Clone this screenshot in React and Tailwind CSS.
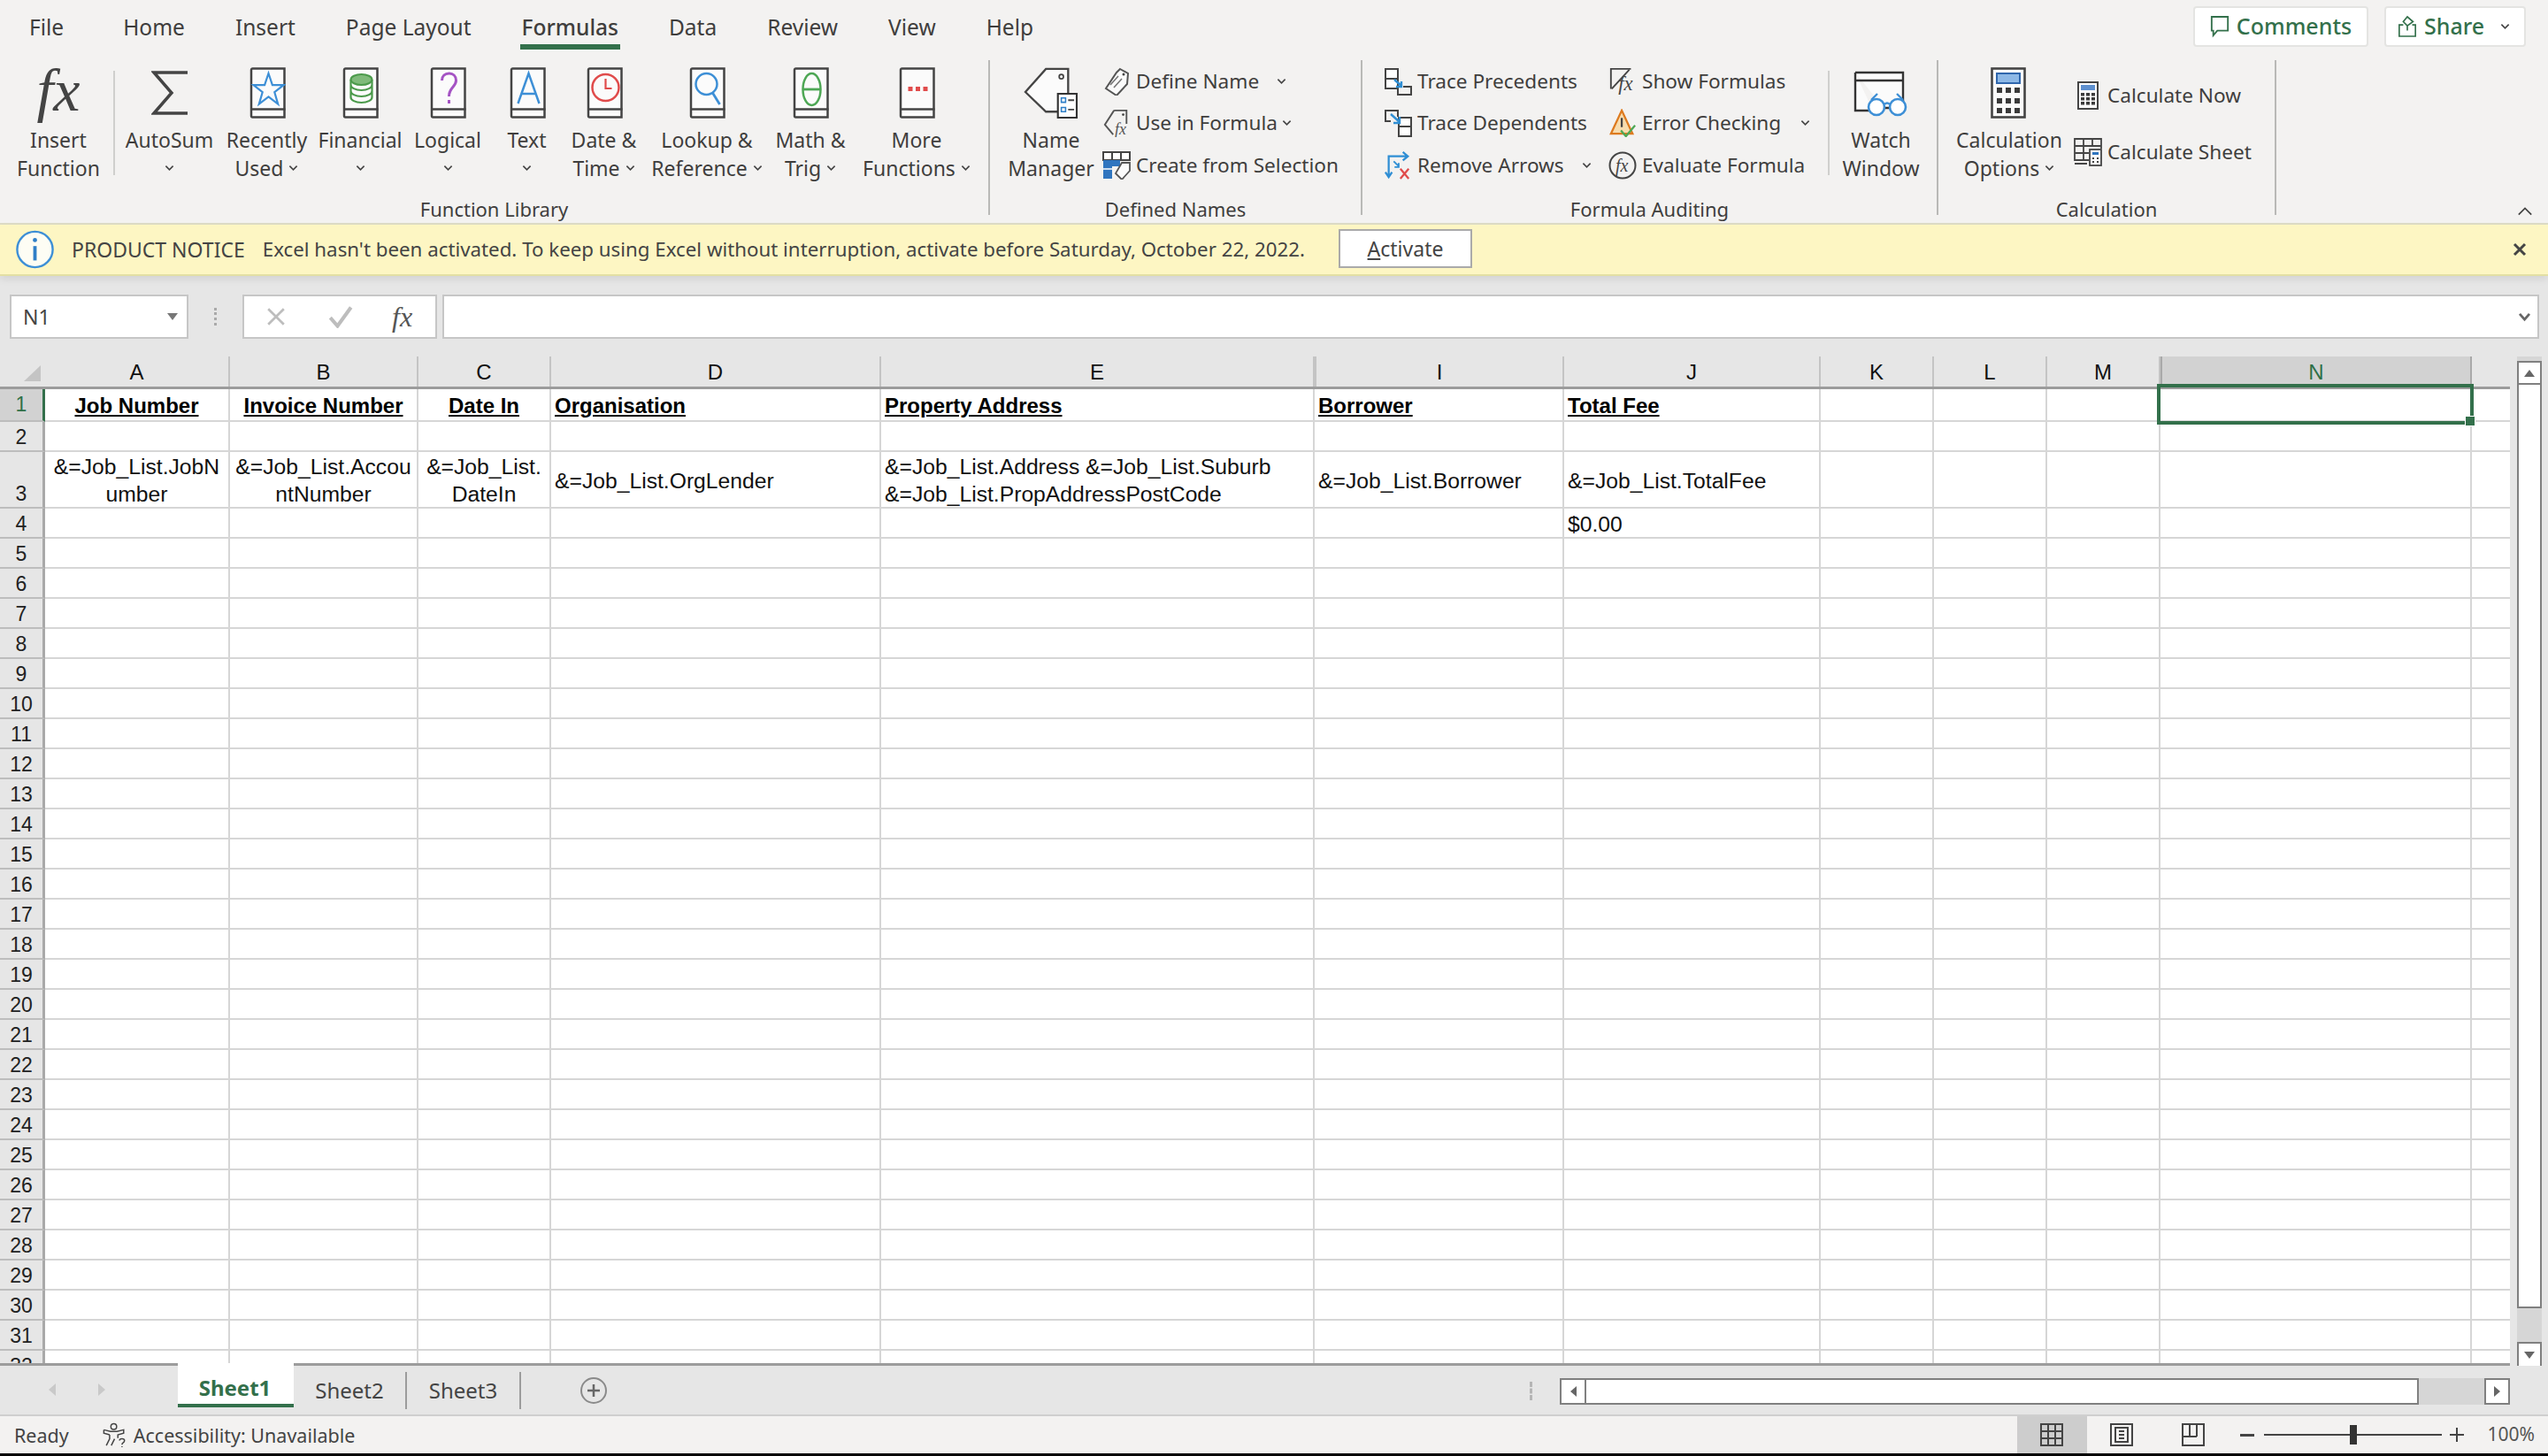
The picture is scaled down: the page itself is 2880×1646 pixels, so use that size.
const TABS = ['File', 'Home', 'Insert', 'Page Layout', 'Formulas', 'Data', 'Review', 'View', 'Help']
const COLUMNS = ['A', 'B', 'C', 'D', 'E', 'I', 'J', 'K', 'L', 'M', 'N']
const GRID = 'grid grid-cols-[51px_209px_213px_150px_373px_490px_282px_290px_128px_128px_128px_352px_1fr]'

const ROW_CONTENT = {
  1: {
    A: ['Job Number', 'head center'],
    B: ['Invoice Number', 'head center'],
    C: ['Date In', 'head center'],
    D: ['Organisation', 'head'],
    E: ['Property Address', 'head'],
    I: ['Borrower', 'head'],
    J: ['Total Fee', 'head'],
  },
  3: {
    A: ['&=Job_List.JobN\number', 'center'],
    B: ['&=Job_List.Accou\nntNumber', 'center'],
    C: ['&=Job_List.\nDateIn', 'center'],
    D: ['&=Job_List.OrgLender', ''],
    E: ['&=Job_List.Address &=Job_List.Suburb\n&=Job_List.PropAddressPostCode', ''],
    I: ['&=Job_List.Borrower', ''],
    J: ['&=Job_List.TotalFee', ''],
  },
  4: { J: ['$0.00', ''] },
}

const rowHeight = (n) => (n === 1 ? 'h-[40px]' : n === 3 ? 'h-[64px]' : 'h-[34px]')
const ROWS = Array.from({ length: 32 }, (_, i) => i + 1)

function Chevron({ className = '' }) {
  return (
    <svg viewBox="0 0 12 8" className={`w-[11px] h-[8px] shrink-0 ${className}`} fill="none" stroke="#444" strokeWidth="1.8">
      <path d="M1.5 1.5 6 6l4.5-4.5" />
    </svg>
  )
}

function Book({ children }) {
  return (
    <svg viewBox="-1.5 0 42 58" className="w-[42px] h-[58px]" fill="none">
      <path d="M3 1.5h36v55H3a1.5 1.5 0 0 1-1.5-1.5V3A1.5 1.5 0 0 1 3 1.5z" fill="#fbfbfb" stroke="#444" strokeWidth="2.5" />
      <path d="M2 47.5h38" stroke="#444" strokeWidth="2.5" />
      {children}
    </svg>
  )
}

const IconSigma = () => (
  <svg viewBox="0 0 42 58" className="w-[42px] h-[58px]" fill="none">
    <path d="M41 6H3l20 23L3 52h38" stroke="#444" strokeWidth="3.5" />
  </svg>
)
const IconStar = () => (
  <Book>
    <path d="M21 7l4.4 13.2H38l-10.2 8 3.9 13.4L21 33.4l-10.7 8.2 3.9-13.4-10.2-8h12.6z" stroke="#3d8fd6" strokeWidth="2.2" />
  </Book>
)
const IconCoins = () => (
  <Book>
    <ellipse cx="21" cy="14" rx="12" ry="6" fill="#7fba7a" stroke="#4b9a4b" strokeWidth="2" />
    <path d="M9 14v6c0 3 5 6 12 6s12-3 12-6v-6M9 20v7c0 3 5 6 12 6s12-3 12-6v-7M9 27v7c0 3 5 6 12 6s12-3 12-6v-7" stroke="#4b9a4b" strokeWidth="2.2" />
  </Book>
)
const IconQuestion = () => (
  <Book>
    <path d="M13 15c0-5 3.5-8 8-8s8 3 8 8c0 7-8 8-8 18" stroke="#a554c4" strokeWidth="3" />
    <path d="M21 37v4" stroke="#a554c4" strokeWidth="3" />
  </Book>
)
const IconA = () => (
  <Book>
    <path d="M9 41 21 7l12 34M13 30h16" stroke="#3d8fd6" strokeWidth="2.5" />
  </Book>
)
const IconClock = () => (
  <Book>
    <circle cx="21" cy="23" r="15" stroke="#e04b4b" strokeWidth="2.5" />
    <path d="M21 13v11h7" stroke="#e04b4b" strokeWidth="2.2" />
  </Book>
)
const IconSearch = () => (
  <Book>
    <circle cx="19" cy="19" r="12" stroke="#3d8fd6" strokeWidth="2.5" />
    <path d="M26 29l8 13" stroke="#3d8fd6" strokeWidth="2.8" />
  </Book>
)
const IconTheta = () => (
  <Book>
    <ellipse cx="21" cy="25" rx="10" ry="18" stroke="#4ea755" strokeWidth="2.5" />
    <path d="M11 25h20" stroke="#4ea755" strokeWidth="2.8" />
  </Book>
)
const IconDots = () => (
  <Book>
    <path d="M10 22h5v5h-5zM18.500 22h5v5h-5zM27 22h5v5h-5z" fill="#e04b4b" />
  </Book>
)
const IconNameManager = () => (
  <svg viewBox="0 0 64 60" className="w-[64px] h-[58px]" fill="none">
    <path d="M26 2h26v50H26L2 29z" fill="#fbfbfb" stroke="#444" strokeWidth="2.4" />
    <circle cx="44" cy="11" r="2.5" stroke="#444" strokeWidth="1.8" />
    <path d="M40 31h22v28H40z" fill="#fff" stroke="#333" strokeWidth="2.2" />
    <path d="M44 36h5v5h-5zM44 47h5v5h-5z" stroke="#2f7fc7" strokeWidth="1.6" />
    <path d="M52 38.500h7M52 49.500h7" stroke="#444" strokeWidth="2" />
  </svg>
)
const IconWatch = () => (
  <svg viewBox="0 0 66 58" className="w-[66px] h-[58px]" fill="none">
    <path d="M4 6h54v40H36M4 6v43h20M4 15h54" stroke="#333" strokeWidth="2.4" fill="#fbfbfb" />
    <circle cx="28" cy="45" r="9" fill="#fff" stroke="#3d8fd6" strokeWidth="2.6" />
    <circle cx="52" cy="45" r="9" fill="#fff" stroke="#3d8fd6" strokeWidth="2.6" />
    <path d="M37 42c2-2 4-2 6 0M22 37l7-7M58 37l-7-7" stroke="#3d8fd6" strokeWidth="2.4" />
  </svg>
)
const IconCalcBig = () => (
  <svg viewBox="0 0 42 58" className="w-[42px] h-[58px]">
    <rect x="1.500" y="1.500" width="37" height="55" fill="#fbfbfb" stroke="#444" strokeWidth="2.6" />
    <rect x="7" y="7" width="26" height="11" fill="#8db8e6" stroke="#2f66ad" strokeWidth="2" />
    {[23, 35, 46].map((y) =>
      [7, 17, 27].map((x) => <rect key={`${x}-${y}`} x={x} y={y} width="6" height="6" fill="#3b3b3b" />),
    )}
  </svg>
)

const IconTag = () => (
  <svg viewBox="0 0 32 32" className="w-[32px] h-[32px]" fill="none">
    <path d="M20 2l9 5-1 12-12 13-12-8L16 6z" stroke="#555" strokeWidth="2" fill="#fbfbfb" />
    <path d="M9 20l9-10M13 23l9-10" stroke="#777" strokeWidth="1.6" />
    <circle cx="24" cy="8" r="1.5" fill="#444" />
  </svg>
)
const IconTagFx = () => (
  <svg viewBox="0 0 32 34" className="w-[32px] h-[32px]" fill="none">
    <path d="M13 2h15v16M13 2 2 19l10 12" stroke="#555" strokeWidth="2" />
    <circle cx="24" cy="7" r="1.500" fill="#444" />
    <text x="14" y="31" fontSize="19" fontStyle="italic" fontFamily="Liberation Serif" fill="#555">fx</text>
  </svg>
)
const IconCreate = () => (
  <svg viewBox="0 0 32 32" className="w-[32px] h-[32px]" fill="none">
    <path d="M1 1h30v9H1z" fill="#fff" stroke="#444" strokeWidth="2" />
    <path d="M11 1v10M21 1v10" stroke="#444" strokeWidth="2" />
    <path d="M1 10h10v21H1z" fill="#2f75bf" />
    <path d="M11 10h9v7h-9z" fill="#2f75bf" />
    <path d="M1 20h10" stroke="#fff" strokeWidth="1.5" />
    <path d="M22 13h9v9l-9 10-7-7z" fill="#fbfbfb" stroke="#555" strokeWidth="1.8" />
  </svg>
)
const IconPrecedents = () => (
  <svg viewBox="0 0 32 32" className="w-[32px] h-[32px]" fill="none">
    <path d="M2 2h14v22H2z" fill="#fff" stroke="#444" strokeWidth="2" />
    <path d="M2 13h14" stroke="#444" strokeWidth="2" />
    <path d="M22 22h9v9H16v-6" stroke="#444" strokeWidth="2" />
    <path d="M12 14l8 7m0-5v6h-6" stroke="#2f8ed4" strokeWidth="2.400" />
  </svg>
)
const IconDependents = () => (
  <svg viewBox="0 0 32 32" className="w-[32px] h-[32px]" fill="none">
    <path d="M16 9V2H2v12h6" stroke="#444" strokeWidth="2" />
    <path d="M17 10h14v21H17z" fill="#fff" stroke="#444" strokeWidth="2" />
    <path d="M17 20h14" stroke="#444" strokeWidth="2" />
    <path d="M8 6l10 9m0-6v7h-7" stroke="#2f8ed4" strokeWidth="2.400" />
  </svg>
)
const IconRemove = () => (
  <svg viewBox="0 0 32 34" className="w-[32px] h-[32px]" fill="none">
    <path d="M5 30V6h21M22 1l6 5-6 5M1 25l4 6 4-6" stroke="#2f8ed4" strokeWidth="2.4" />
    <path d="M11 12l6 6m0-4v5h-5" stroke="#2f8ed4" strokeWidth="2" />
    <path d="M19 21l10 12M29 21 19 33" stroke="#e04b4b" strokeWidth="2.4" />
  </svg>
)
const IconShowFormulas = () => (
  <svg viewBox="0 0 32 34" className="w-[32px] h-[32px]" fill="none">
    <path d="M2 26V2h24" stroke="#444" strokeWidth="2" />
    <path d="M3 26 24 3" stroke="#444" strokeWidth="2" />
    <text x="11" y="28" fontSize="24" fontStyle="italic" fontFamily="Liberation Serif" fill="#444">fx</text>
  </svg>
)
const IconError = () => (
  <svg viewBox="0 0 32 34" className="w-[32px] h-[32px]" fill="none">
    <path d="M15 2 2 30h26z" fill="#f7dcae" stroke="#dd7a1f" strokeWidth="2.4" />
    <path d="M15 11v11" stroke="#444" strokeWidth="2.4" />
    <path d="M14 26l6 7 11-13" stroke="#4ea755" strokeWidth="2.4" />
  </svg>
)
const IconEvaluate = () => (
  <svg viewBox="0 0 32 32" className="w-[32px] h-[32px]" fill="none">
    <circle cx="16" cy="16" r="14.500" stroke="#444" strokeWidth="2" />
    <text x="8" y="23" fontSize="20" fontStyle="italic" fontFamily="Liberation Serif" fill="#444">fx</text>
  </svg>
)
const IconCalcNow = () => (
  <svg viewBox="0 0 24 32" className="w-[24px] h-[32px]">
    <rect x="1" y="1" width="22" height="30" fill="#fbfbfb" stroke="#444" strokeWidth="2" />
    <rect x="4" y="4" width="16" height="6" fill="#5d8fcf" />
    {[13, 18, 23].map((y) =>
      [4, 10, 16].map((x) => <rect key={`${x}-${y}`} x={x} y={y} width="4" height="3.500" fill="#3b3b3b" />),
    )}
  </svg>
)
const IconCalcSheet = () => (
  <svg viewBox="0 0 32 32" className="w-[32px] h-[32px]" fill="none">
    <path d="M1 26V1h30v11M1 9h30M1 17h16M1 25h16M11 1v24M21 1v8" stroke="#444" strokeWidth="1.800" />
    <rect x="18" y="13" width="13" height="18" fill="#fbfbfb" stroke="#444" strokeWidth="1.800" />
    <path d="M21 16h7v3h-7z" fill="#2f75bf" />
    <path d="M21 22h2v2h-2zM26 22h2v2h-2zM21 26h2v2h-2zM26 26h2v2h-2z" fill="#444" />
    <path d="M1 29h14" stroke="#444" strokeWidth="2" />
  </svg>
)
const IconComment = () => (
  <svg viewBox="0 0 24 28" className="w-[22px] h-[26px]" fill="none" stroke="#33704b" strokeWidth="2">
    <path d="M2 2h20v17H9l-5 6v-6H2z" />
  </svg>
)
const IconShare = () => (
  <svg viewBox="0 0 24 28" className="w-[22px] h-[28px]" fill="none" stroke="#33704b" strokeWidth="1.800">
    <path d="M7 12H2v14h20V12h-4M12 2l7 6-7 5-5-5zM12 13v6" />
  </svg>
)
const IconAccessibility = () => (
  <svg viewBox="0 0 30 30" className="w-[29px] h-[28px]" fill="none" stroke="#444" strokeWidth="1.600">
    <circle cx="14" cy="5" r="3.500" />
    <path d="M2 9l8 2h8l8-2v4l-7 2v4M9 15 2 13V9M9 15v5l-4 8M15 20l-4 8" />
    <path d="M21 22c0-3 6-3 6 0s-3 2-3 5M24 29v1" />
  </svg>
)

function BigButton({ icon, top, bottom, chevron, className }) {
  return (
    <div className={`flex flex-col items-center shrink-0 pt-2 ${className}`}>
      <div className="h-[58px] flex items-center justify-center">{icon}</div>
      <div className="mt-2 leading-[32px] whitespace-nowrap text-center">{top}</div>
      <div className="leading-[32px] whitespace-nowrap flex items-center justify-center gap-[6px] h-[32px]">
        {bottom}
        {chevron && <Chevron />}
      </div>
    </div>
  )
}

function SmallRow({ icon, label, chevron, className = '' }) {
  return (
    <div className={`h-[48px] flex items-center whitespace-nowrap text-[22.6px] -mt-[0.5px] ${className}`}>
      <span className="w-[32px] h-[32px] flex items-center justify-center shrink-0 mr-[6px]">{icon}</span>
      {label}
      {chevron && <Chevron className="ml-auto" />}
    </div>
  )
}

function Group({ label, className, children }) {
  return (
    <div className={`shrink-0 h-[175px] border-r-2 border-[#b9b9b7] ${className}`}>
      <div className="flex h-[152px]">{children}</div>
      <div className="h-[23px] leading-[32px] text-center text-[22px] whitespace-nowrap">{label}</div>
    </div>
  )
}

const Divider = () => <div className="w-[2px] h-[118px] mt-3 bg-[#cfcfcd] shrink-0" />

function Ribbon() {
  return (
    <div className="h-[254px] shrink-0 bg-[#f3f2f1] text-[#3f3e3d] text-[23px] font-['Noto_Sans',sans-serif] border-b-2 border-[#dddcc6]">
      <div className="h-[68px] flex items-start pl-[31px] pr-[25px]">
        <div className="flex gap-[53px] text-[24.5px]">
          {TABS.map((tab) => (
            <div
              key={tab}
              className={`h-[56px] px-[2px] leading-[62px] whitespace-nowrap ${tab === 'Formulas' ? 'border-b-[6px] border-[#33704b] font-medium' : ''} ${tab === 'File' ? 'mr-[10px]' : ''}`}
            >
              {tab}
            </div>
          ))}
        </div>
        <div className="ml-auto flex gap-[18px] pt-[7px] text-[#33704b] text-[25px] font-medium">
          <div className="w-[198px] h-[46px] bg-white border-2 border-[#e4e4e2] rounded-[4px] flex items-center justify-center gap-2">
            <IconComment />
            Comments
          </div>
          <div className="w-[160px] h-[46px] bg-white border-2 border-[#e4e4e2] rounded-[4px] flex items-center pl-[13px] gap-2">
            <IconShare />
            Share
            <Chevron className="ml-[10px]" />
          </div>
        </div>
      </div>
      <div className="flex relative">
        <Group label="Function Library" className="w-[1119px]">
          <BigButton
            className="w-[124px] ml-1"
            icon={<span className="font-['Liberation_Serif',serif] italic text-[68px] leading-none text-[#444] -mt-[6px]">fx</span>}
            top="Insert"
            bottom="Function"
          />
          <Divider />
          <BigButton className="w-[117px] ml-[3px]" icon={<IconSigma />} top="AutoSum" chevron />
          <BigButton className="w-[103px]" icon={<IconStar />} top="Recently" bottom="Used" chevron />
          <BigButton className="w-[108px]" icon={<IconCoins />} top="Financial" chevron />
          <BigButton className="w-[90px]" icon={<IconQuestion />} top="Logical" chevron />
          <BigButton className="w-[89px]" icon={<IconA />} top="Text" chevron />
          <BigButton className="w-[85px]" icon={<IconClock />} top="Date &" bottom="Time" chevron />
          <BigButton className="w-[148px]" icon={<IconSearch />} top="Lookup &" bottom="Reference" chevron />
          <BigButton className="w-[86px]" icon={<IconTheta />} top="Math &" bottom="Trig" chevron />
          <BigButton className="w-[154px]" icon={<IconDots />} top="More" bottom="Functions" chevron />
        </Group>
        <Group label="Defined Names" className="w-[421px]">
          <BigButton className="w-[94px] ml-[22px]" icon={<IconNameManager />} top="Name" bottom="Manager" />
          <div className="ml-[11px]">
            <SmallRow icon={<IconTag />} label="Define Name" chevron className="w-[208px]" />
            <SmallRow icon={<IconTagFx />} label="Use in Formula" chevron className="w-[214px]" />
            <SmallRow icon={<IconCreate />} label="Create from Selection" />
          </div>
        </Group>
        <Group label="Formula Auditing" className="w-[651px]">
          <div className="ml-6 w-[254px]">
            <SmallRow icon={<IconPrecedents />} label="Trace Precedents" />
            <SmallRow icon={<IconDependents />} label="Trace Dependents" />
            <SmallRow icon={<IconRemove />} label="Remove Arrows" chevron className="w-[235px]" />
          </div>
          <div className="w-[248px]">
            <SmallRow icon={<IconShowFormulas />} label="Show Formulas" />
            <SmallRow icon={<IconError />} label="Error Checking" chevron className="w-[228px]" />
            <SmallRow icon={<IconEvaluate />} label="Evaluate Formula" />
          </div>
          <Divider />
          <BigButton className="w-[112px] ml-[2px]" icon={<IconWatch />} top="Watch" bottom="Window" />
        </Group>
        <Group label="Calculation" className="w-[382px]">
          <BigButton className="w-[130px] ml-[15px]" icon={<IconCalcBig />} top="Calculation" bottom="Options" chevron />
          <div className="ml-2 pt-[8px] text-[22.6px]">
            <div className="h-[64px] flex items-center whitespace-nowrap">
              <span className="w-[32px] flex justify-center mr-[6px]"><IconCalcNow /></span>
              Calculate Now
            </div>
            <div className="h-[64px] flex items-center whitespace-nowrap">
              <span className="w-[32px] flex justify-center mr-[6px]"><IconCalcSheet /></span>
              Calculate Sheet
            </div>
          </div>
        </Group>
        <svg viewBox="0 0 20 12" className="absolute left-[2845px] top-[165px] w-[18px] h-[12px]" fill="none" stroke="#444" strokeWidth="2">
          <path d="M2 10l8-8 8 8" />
        </svg>
      </div>
    </div>
  )
}

function Notice() {
  return (
    <div className="h-[58px] shrink-0 relative bg-[#fdf6c3] border-b-2 border-[#e3dfa3] shadow-[0_4px_8px_rgba(0,0,0,0.08)] flex items-center pl-[17px] pr-[24px] text-[#444] text-[23px] font-['Noto_Sans',sans-serif] z-10">
      <svg viewBox="0 0 46 46" className="w-[45px] h-[44px] shrink-0">
        <circle cx="23" cy="23" r="21" fill="#fdfdf4" stroke="#3d8fd6" strokeWidth="2.500" />
        <circle cx="23" cy="12" r="2.500" fill="#2f7fc7" />
        <path d="M23 19v17" stroke="#2f7fc7" strokeWidth="4" />
      </svg>
      <span className="ml-[19px] whitespace-nowrap">PRODUCT NOTICE</span>
      <span className="ml-[20px] whitespace-nowrap text-[22.3px]">
        Excel hasn't been activated. To keep using Excel without interruption, activate before Saturday, October 22, 2022.
      </span>
      <div className="absolute left-[1513px] top-[5px] w-[151px] h-[44px] bg-white border-2 border-[#aaa] flex items-center justify-center">
        <span><span className="underline">A</span>ctivate</span>
      </div>
      <svg viewBox="0 0 16 16" className="ml-auto w-[16px] h-[16px]" fill="none" stroke="#444" strokeWidth="3">
        <path d="M2 2l12 12M14 2 2 14" />
      </svg>
    </div>
  )
}

function FormulaBar() {
  return (
    <div className="h-[91px] shrink-0 bg-[#e6e6e6] pt-[21px] pl-[11px] pr-[10px] flex font-['Noto_Sans',sans-serif]">
      <div className="w-[202px] h-[50px] bg-white border-2 border-[#c6c6c6] flex items-center justify-between pl-[13px] pr-[10px] text-[23px] text-[#444]">
        N1
        <span className="w-0 h-0 border-x-[6px] border-x-transparent border-t-[8px] border-t-[#777]" />
      </div>
      <div className="w-[61px] h-[50px] flex items-center justify-center">
        <div className="h-[20px] border-l-[3px] border-dotted border-[#aaa]" />
      </div>
      <div className="w-[220px] h-[50px] bg-white border-2 border-[#c6c6c6] flex items-center">
        <svg viewBox="0 0 20 20" className="ml-[25px] w-[22px] h-[22px]" fill="none" stroke="#bdbdbd" strokeWidth="2.500">
          <path d="M2 2l16 16M18 2 2 18" />
        </svg>
        <svg viewBox="0 0 24 22" className="ml-[48px] w-[28px] h-[26px]" fill="none" stroke="#bdbdbd" strokeWidth="3.500">
          <path d="M2 12l7 8L22 2" />
        </svg>
        <span className="ml-[44px] font-['Liberation_Serif',serif] italic text-[32px] leading-none text-[#555]">fx</span>
      </div>
      <div className="ml-[6px] flex-1 h-[50px] bg-white border-2 border-[#c6c6c6] flex items-center justify-end pr-[7px]">
        <svg viewBox="0 0 16 12" className="w-[15px] h-[11px]" fill="none" stroke="#666" strokeWidth="3">
          <path d="M2 2l6 7 6-7" />
        </svg>
      </div>
    </div>
  )
}

function CellText({ value }) {
  if (!value) return null
  const [text, kind] = value
  const isHead = kind.includes('head')
  const isCenter = kind.includes('center')
  return (
    <div
      className={`w-full whitespace-pre leading-[31px] ${isHead ? 'pt-[4px]' : 'pt-[2px]'} ${isCenter ? 'text-center' : 'pl-[4px]'} ${isHead ? 'font-bold underline text-[24px] text-black' : 'text-[24.7px] text-[#111]'}`}
    >
      {text}
    </div>
  )
}

function Sheet() {
  return (
    <div className="flex-1 min-h-0 flex bg-[#e6e6e6] font-['Liberation_Sans',sans-serif] leading-none">
      <div className="w-[2837px] relative overflow-hidden border-b-[3px] border-[#9c9c9c]">
        <div className={`${GRID} h-[34px] border-b-[3px] border-[#9c9c9c] box-content -mb-[3px] relative`}>
          <div className="relative">
            <span className="absolute left-[27px] top-[10px] w-0 h-0 border-l-[19px] border-l-transparent border-b-[18px] border-b-[#c4c4c4]" />
          </div>
          {COLUMNS.map((col) => (
            <div
              key={col}
              className={`flex items-center justify-center text-[24px] pt-[2px] ${col === 'N' ? 'bg-[#d2d2d2] text-[#2f7048] border-x-2 border-[#a9a9a9]' : 'text-[#111] border-r-2 border-[#c4c4c4]'} ${col === 'I' ? 'border-l-2' : ''}`}
            >
              {col}
            </div>
          ))}
          <div />
        </div>
        {ROWS.map((n) => (
          <div key={n} className={`${GRID} ${rowHeight(n)}`}>
            <div
              className={`flex justify-center text-[23px] border-b-2 border-r-[3px] pt-[3px] ${n === 3 ? 'items-end pb-[3px]' : 'items-center'} ${n === 1 ? 'bg-[#d2d2d2] text-[#2f7048] border-r-[#33704b] border-b-[#bdbdbd]' : 'bg-[#e6e6e6] text-[#222] border-r-[#a9a9a9] border-b-[#bdbdbd]'}`}
            >
              {n}
            </div>
            {COLUMNS.map((col) => (
              <div key={col} className="bg-white border-r-2 border-b-2 border-[#d6d6d6] flex items-center overflow-hidden">
                <CellText value={ROW_CONTENT[n]?.[col]} />
              </div>
            ))}
            <div className="bg-white border-b-2 border-[#d6d6d6]" />
          </div>
        ))}
        {/* active cell */}
        <div className="absolute left-[2438px] top-[31px] w-[358px] h-[46px] border-[4px] border-[#33704b] pointer-events-none">
          <span className="absolute -right-[6px] -bottom-[6px] w-[10px] h-[10px] bg-[#33704b] border border-white box-content" />
        </div>
      </div>
      <div className="ml-[8px] w-[28px] flex flex-col h-[1143px] bg-[#d6d6d6]">
        <div className="mt-[5px] h-[27px] bg-white border-2 border-[#808080] flex items-center justify-center shrink-0">
          <span className="w-0 h-0 border-x-[6px] border-x-transparent border-b-[8px] border-b-[#666]" />
        </div>
        <div className="h-[1044px] bg-white border-x-2 border-b-2 border-[#808080] shrink-0" />
        <div className="mt-auto h-[29px] bg-white border-2 border-[#808080] flex items-center justify-center shrink-0">
          <span className="w-0 h-0 border-x-[6px] border-x-transparent border-t-[8px] border-t-[#666]" />
        </div>
      </div>
    </div>
  )
}

function SheetTabs() {
  return (
    <div className="h-[57px] shrink-0 bg-[#e6e6e6] border-b-2 border-[#cfcfcf] flex items-start relative text-[24px] text-[#444] font-['Noto_Sans',sans-serif]">
      <span className="ml-[55px] mt-[20px] w-0 h-0 border-y-[7px] border-y-transparent border-r-[8px] border-r-[#c9c9c9]" />
      <span className="ml-[48px] mt-[20px] w-0 h-0 border-y-[7px] border-y-transparent border-l-[8px] border-l-[#c9c9c9]" />
      <div className="ml-[82px] w-[131px] h-[50px] -mt-[3px] pt-[9px] pr-[2px] bg-white border-b-[4px] border-[#33704b] flex items-center justify-center font-bold text-[#33704b]">
        Sheet1
      </div>
      <div className="w-[128px] h-[42px] mt-[7px] border-r-2 border-[#9c9c9c] flex items-center justify-center">Sheet2</div>
      <div className="w-[129px] h-[42px] mt-[7px] border-r-2 border-[#9c9c9c] flex items-center justify-center">Sheet3</div>
      <svg viewBox="0 0 32 32" className="ml-[66px] mt-[12px] w-[32px] h-[32px]" fill="none">
        <circle cx="16" cy="16" r="14" stroke="#8a8a8a" strokeWidth="2" />
        <path d="M16 9v14M9 16h14" stroke="#666" strokeWidth="2.500" />
      </svg>
      <div className="absolute left-[1729px] top-[18px] h-[21px] border-l-[3px] border-dashed border-[#b5b5b5]" />
      <div className="absolute left-[1763px] top-[14px] w-[1074px] h-[30px] bg-[#d6d6d6] flex">
        <div className="w-[30px] bg-white border-2 border-[#808080] flex items-center justify-center">
          <span className="w-0 h-0 border-y-[6px] border-y-transparent border-r-[7px] border-r-[#666]" />
        </div>
        <div className="w-[941px] bg-white border-y-2 border-r-2 border-[#808080]" />
        <div className="ml-auto w-[29px] bg-white border-2 border-[#808080] flex items-center justify-center">
          <span className="w-0 h-0 border-y-[6px] border-y-transparent border-l-[7px] border-l-[#666]" />
        </div>
      </div>
    </div>
  )
}

function StatusBar() {
  return (
    <div className="h-[42px] shrink-0 bg-[#f3f2f1] flex items-center text-[21.5px] text-[#444] font-['Noto_Sans',sans-serif]">
      <span className="ml-[16px] pt-[2px]">Ready</span>
      <span className="ml-[37px]"><IconAccessibility /></span>
      <span className="ml-[7px] pt-[2px] whitespace-nowrap">Accessibility: Unavailable</span>
      <div className="ml-auto w-[79px] h-[42px] bg-[#cdcdcd] flex items-center justify-center">
        <svg viewBox="0 0 26 26" className="w-[26px] h-[26px]" fill="none" stroke="#444" strokeWidth="2">
          <path d="M1 1h24v24H1zM1 9h24M1 17h24M9 1v24M17 1v24" />
        </svg>
      </div>
      <svg viewBox="0 0 26 26" className="ml-[26px] w-[26px] h-[26px]" fill="none" stroke="#444" strokeWidth="2">
        <path d="M1 1h24v24H1zM6 5h14v16H6zM10 9h6M10 13h6M10 17h6" />
      </svg>
      <svg viewBox="0 0 26 26" className="ml-[55px] w-[26px] h-[26px]" fill="none" stroke="#444" strokeWidth="2">
        <path d="M1 1h24v24H1zM1 15h16M9 1v14M17 1v14" />
      </svg>
      <span className="ml-[40px] w-[16px] h-[3px] bg-[#444]" />
      <div className="ml-[11px] w-[201px] h-[22px] relative flex items-center">
        <div className="w-full h-[2px] bg-[#444]" />
        <div className="absolute left-[97px] top-0 w-[8px] h-[22px] bg-[#333]" />
      </div>
      <svg viewBox="0 0 16 16" className="ml-[9px] w-[16px] h-[16px]" fill="none" stroke="#444" strokeWidth="2">
        <path d="M8 0v16M0 8h16" />
      </svg>
      <span className="ml-[27px] mr-[15px] text-[21px] text-[#555]">100%</span>
    </div>
  )
}

export default function App() {
  return (
    <div className="w-[2880px] h-[1646px] overflow-hidden flex flex-col bg-black">
      <Ribbon />
      <Notice />
      <FormulaBar />
      <Sheet />
      <SheetTabs />
      <StatusBar />
      <div className="h-[3px] shrink-0 bg-black" />
    </div>
  )
}
